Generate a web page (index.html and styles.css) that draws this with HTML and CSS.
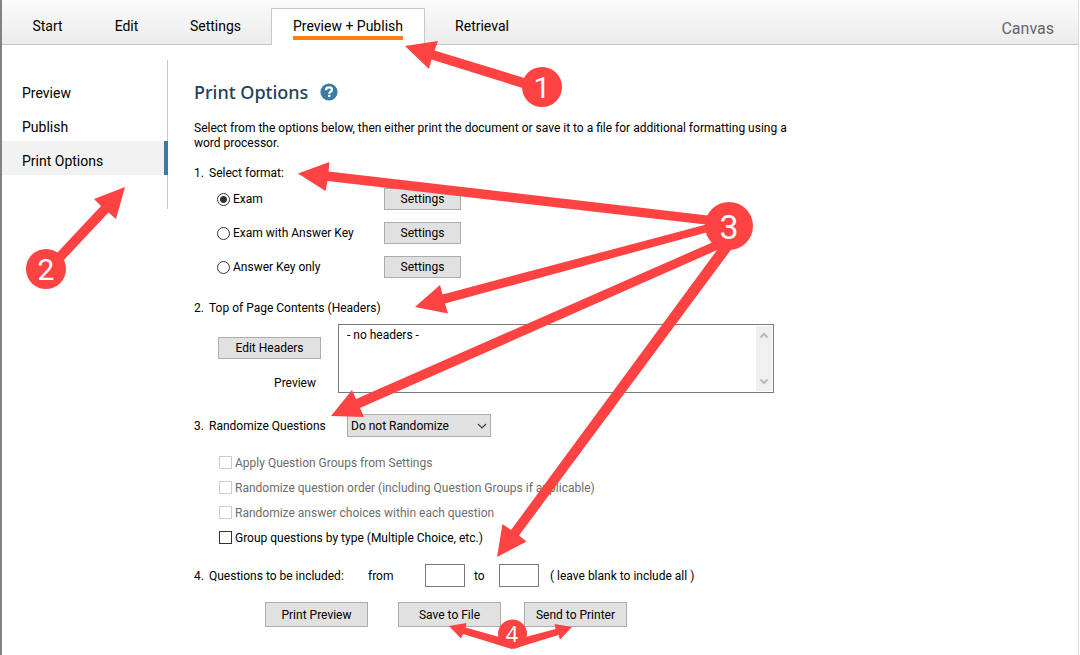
FILE: index.html
```html
<!DOCTYPE html>
<html lang="en">
<head>
<meta charset="utf-8">
<meta name="viewport" content="width=device-width, initial-scale=1">
<title>Print Options</title>
<link rel="stylesheet" href="styles.css">
</head>
<body>
<div class="window">
  <header class="topbar">
    <nav class="tabs" aria-label="Main">
      <a class="tab tab-start" href="#start"><span class="tab-label">Start</span></a>
      <a class="tab tab-edit" href="#edit"><span class="tab-label">Edit</span></a>
      <a class="tab tab-settings" href="#settings"><span class="tab-label">Settings</span></a>
      <a class="tab tab-publish tab-active" href="#publish" aria-current="page"><span class="tab-label">Preview + Publish</span></a>
      <a class="tab tab-retrieval" href="#retrieval"><span class="tab-label">Retrieval</span></a>
    </nav>
    <span class="target">Canvas</span>
  </header>

  <div class="body">
    <nav class="sidebar" aria-label="Preview and publish">
      <a class="side-item" href="#preview">Preview</a>
      <a class="side-item" href="#publish">Publish</a>
      <a class="side-item side-active" href="#print" aria-current="page">Print Options</a>
    </nav>

    <main class="content">
      <div class="title-row">
        <h1 class="title">Print Options</h1>
        <button class="help" type="button" aria-label="Help">
          <svg class="help-icon" viewBox="0 0 18 18" aria-hidden="true">
            <circle cx="9" cy="9" r="8.6" fill="#397ba3"/>
            <path d="M5.900 7.200C5.900 5.100 7.200 4.300 9 4.300C10.900 4.300 12 5.300 12 6.700C12 8.500 9.300 8.600 9.300 10.700" fill="none" stroke="#fff" stroke-width="2.300"/>
            <rect x="8" y="11.800" width="2.500" height="2.300" fill="#fff"/>
          </svg>
        </button>
      </div>
      <p class="intro">Select from the options below, then either print the document or save it to a file for additional formatting using a word processor.</p>

      <section class="formats" role="radiogroup" aria-labelledby="h-format">
        <h2 class="step" id="h-format"><span class="num">1.</span>Select format:</h2>
        <div class="format">
          <label class="choice"><input class="radio" type="radio" name="format" checked>Exam</label>
          <button class="btn btn-settings" type="button">Settings</button>
        </div>
        <div class="format">
          <label class="choice"><input class="radio" type="radio" name="format">Exam with Answer Key</label>
          <button class="btn btn-settings" type="button">Settings</button>
        </div>
        <div class="format">
          <label class="choice"><input class="radio" type="radio" name="format">Answer Key only</label>
          <button class="btn btn-settings" type="button">Settings</button>
        </div>
      </section>

      <section class="headers">
        <h2 class="step"><span class="num">2.</span>Top of Page Contents (Headers)</h2>
        <div class="headers-row">
          <div class="headers-side">
            <button class="btn btn-wide" type="button">Edit Headers</button>
            <label class="preview-label" for="header-preview">Preview</label>
          </div>
          <div class="preview-box">
            <textarea class="preview-text" id="header-preview" readonly>- no headers -</textarea>
            <div class="scrollbar" aria-hidden="true">
              <svg class="arrow" viewBox="0 0 10 7"><path d="M1.5 5.5L5 2L8.5 5.5" fill="none" stroke="#b8b8b8" stroke-width="2"/></svg>
              <svg class="arrow" viewBox="0 0 10 7"><path d="M1.5 1.5L5 5L8.5 1.5" fill="none" stroke="#b8b8b8" stroke-width="2"/></svg>
            </div>
          </div>
        </div>
      </section>

      <section class="randomize">
        <div class="randomize-row">
          <label class="step step-select" for="randomize"><span class="num">3.</span>Randomize Questions</label>
          <div class="select-wrap">
            <select class="select" id="randomize"><option>Do not Randomize</option></select>
            <svg class="chevron" viewBox="0 0 10 6" aria-hidden="true"><path d="M1 1L5 5L9 1" fill="none" stroke="#444" stroke-width="1.2"/></svg>
          </div>
        </div>
        <div class="checks">
          <label class="check check-off"><input class="box" type="checkbox" disabled>Apply Question Groups from Settings</label>
          <label class="check check-off"><input class="box" type="checkbox" disabled>Randomize question order (including Question Groups if applicable)</label>
          <label class="check check-off"><input class="box" type="checkbox" disabled>Randomize answer choices within each question</label>
          <label class="check"><input class="box" type="checkbox">Group questions by type (Multiple Choice, etc.)</label>
        </div>
      </section>

      <div class="range">
        <span class="step step-range"><span class="num">4.</span>Questions to be included:</span>
        <label class="from" for="q-from">from</label>
        <input class="field" id="q-from" type="text">
        <label class="to" for="q-to">to</label>
        <input class="field" id="q-to" type="text">
        <span class="hint">( leave blank to include all )</span>
      </div>

      <div class="actions">
        <button class="btn btn-wide btn-action" type="button">Print Preview</button>
        <button class="btn btn-wide btn-action btn-save" type="button">Save to File</button>
        <button class="btn btn-wide btn-action" type="button">Send to Printer</button>
      </div>
    </main>
  </div>

  <svg class="callouts" width="1080" height="655" viewBox="0 0 1080 655" role="img" aria-label="Numbered callouts">
    <g fill="#ff4343">
      <path d="M405 46L438 41L434.500 50.500L526 78.500L522.500 88L431.500 59.500L429 69Z"/>
      <circle cx="542" cy="87" r="20"/>
      <path d="M125 187L94 199L101 206L56 254L63 261L108.500 212.500L116 219Z"/>
      <circle cx="46" cy="269" r="20"/>
      <path d="M298 173.500L329.500 162L328.500 171.500L712 216L710 225L327.500 181L325.500 191Z"/>
      <path d="M415 307L440 285L442.500 294.500L710 223.500L712 231L445 303.500L448 313.500Z"/>
      <path d="M331 416L352 390L356 399L720 239L724 247L360 408L364 417Z"/>
      <path d="M497 557L502.500 524L511 530L723 242L733 247L519 535.500L526.500 541.500Z"/>
      <circle cx="729" cy="226" r="24"/>
      <path d="M449 626L466.500 623L465.500 627.500L514 641L512 649L463 634L461 638.500Z"/>
      <path d="M572 627L554.500 624L555.500 629L511 641L513 649L558.500 635L560 639.500Z"/>
      <circle cx="512.500" cy="634" r="14.500"/>
    </g>
    <g class="callout-nums">
      <text x="542" y="98" font-size="30">1</text>
      <text x="46" y="280" font-size="30">2</text>
      <text x="729" y="239" font-size="34">3</text>
      <text x="512" y="642" font-size="22" class="num-small">4</text>
    </g>
  </svg>
</div>
</body>
</html>
```
FILE: styles.css
```css
* { box-sizing: border-box; }

body {
  margin: 0;
  background: #fff;
  color: #000;
  font: 12px/16px Roboto, "Open Sans", sans-serif;
}

button, input, select, textarea { font: inherit; color: inherit; margin: 0; }
a { color: inherit; text-decoration: none; }

.window {
  position: relative;
  min-height: 100vh;
  margin-right: 1px;
  border-left: 2px solid #828282;
  border-right: 1px solid #dcdcdc;
  overflow: hidden;
}

.topbar {
  display: flex;
  justify-content: space-between;
  height: 45px;
  padding: 8px 24px 0 9px;
  border-bottom: 1px solid #c8c8c8;
  background: linear-gradient(#fbfbfb, #ececec);
}

.tabs { display: flex; gap: 9px; }
.tab {
  display: flex;
  justify-content: center;
  height: 37px;
  padding-top: 7px;
  border: 1px solid transparent;
  border-bottom: 0;
  font-size: 14px;
  line-height: 20px;
  white-space: nowrap;
}
.tab-label { height: 24px; }
.tab-start { width: 73px; }
.tab-edit { width: 67px; }
.tab-settings { width: 93px; }
.tab-publish { width: 154px; }
.tab-retrieval { width: 96px; }
.tab-active { background: #fff; border-color: #c8c8c8; }
.tab-active .tab-label { border-bottom: 4px solid #ff7f0e; }

.target { padding-top: 11px; color: #666; font-size: 16px; line-height: 20px; }

.body { display: flex; align-items: flex-start; padding-top: 15px; }

.sidebar {
  display: flex;
  flex: none;
  flex-direction: column;
  width: 166px;
  padding: 13px 0 34px;
  border-right: 1px solid #c8c8c8;
  font-size: 14px;
}
.side-item { height: 34px; padding: 6px 0 0 20px; line-height: 28px; }
.side-active {
  margin-right: -1px;
  border-right: 4px solid #397ba3;
  background: #f2f2f2;
}

.content { flex: 1; min-width: 0; padding: 20px 24px 24px 26px; }

.title-row { display: flex; align-items: center; gap: 12px; height: 24px; }
.title { margin: 0; color: #1d4259; font-family: "Noto Sans", "Open Sans", sans-serif; font-size: 18px; font-weight: 500; line-height: 24px; }
.help { display: flex; padding: 0; border: 0; background: none; }
.help-icon { width: 18px; height: 18px; }

.intro { max-width: 610px; margin: 17px 0 14px; line-height: 15px; }

.step { display: flex; margin: 0; font-size: 12px; font-weight: 400; line-height: 16px; white-space: nowrap; }
.num { flex: none; width: 15px; }

.formats { padding-bottom: 16px; }
.formats .step { margin-bottom: 1px; }
.format { display: flex; align-items: center; height: 34px; padding-left: 23px; }
.choice { display: flex; align-items: center; width: 167px; gap: 3px; white-space: nowrap; }
.radio {
  appearance: none;
  width: 13px;
  height: 13px;
  border: 1px solid #333;
  border-radius: 50%;
  background: #fff;
}
.radio:checked { background: radial-gradient(circle, #333 3px, #fff 4px); }

.btn {
  height: 22px;
  padding: 0;
  border: 1px solid #adadad;
  background: #e1e1e1;
  line-height: 16px;
  text-align: center;
  white-space: nowrap;
}
.btn-settings { width: 77px; }
.btn-wide { width: 103px; }
.btn-action { height: 25px; }

.headers-row { display: flex; gap: 17px; margin: 8px 0 21px; padding-left: 24px; }
.headers-side { display: flex; flex-direction: column; align-items: flex-end; padding-top: 13px; }
.preview-label { margin: 16px 5px 0 0; }
.preview-box { display: flex; width: 436px; height: 69px; padding: 1px; border: 1px solid #7a7a7a; background: #fff; }
.preview-text { flex: 1; min-width: 0; padding: 1px 7px; border: 0; outline: 0; resize: none; overflow: hidden; background: none; }
.scrollbar { display: flex; flex-direction: column; justify-content: space-between; align-items: center; width: 16px; padding: 6px 0; background: #f0f0f0; }
.arrow { width: 10px; height: 7px; }

.randomize-row { display: flex; align-items: center; }
.step-select { width: 153px; }
.select-wrap { display: grid; width: 144px; align-items: center; }
.select-wrap > * { grid-area: 1 / 1; }
.select { appearance: none; height: 23px; padding: 0 24px 0 3px; border: 1px solid #adadad; border-radius: 0; background: #e1e1e1; }
.chevron { justify-self: end; width: 10px; height: 6px; margin-right: 4px; pointer-events: none; }

.checks { margin: 13px 0 14px; padding-left: 25px; }
.check { display: flex; align-items: center; gap: 3px; height: 25px; white-space: nowrap; }
.check-off { color: #6d6d6d; }
.box { appearance: none; width: 13px; height: 13px; border: 1px solid #333; background: #fff; }
.box:disabled { border-color: #ccc; }

.range { display: flex; align-items: center; }
.step-range { width: 174px; }
.from { width: 57px; }
.to { width: 34px; padding-left: 9px; }
.field { width: 40px; height: 23px; padding: 0 4px; border: 1px solid #7a7a7a; border-radius: 0; background: #fff; }
.hint { padding-left: 11px; }

.actions { display: flex; margin-top: 15px; padding-left: 71px; gap: 23px; }
.btn-save { margin-left: 7px; }

/* Numbered arrows drawn over the form */
.callouts { position: absolute; top: 0; left: -2px; pointer-events: none; }
.callout-nums { fill: #fff; font-family: Roboto, sans-serif; text-anchor: middle; }
.num-small { font-family: "Open Sans", sans-serif; }
```
